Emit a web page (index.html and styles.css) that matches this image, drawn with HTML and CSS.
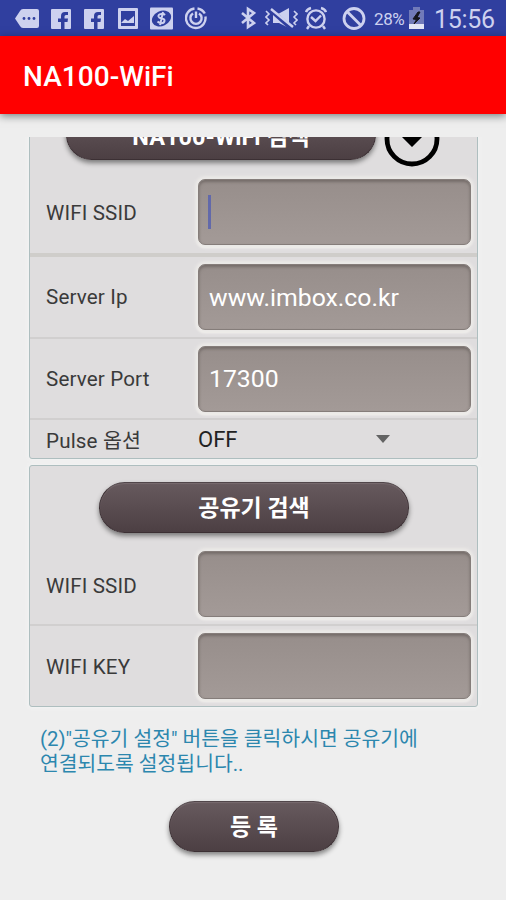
FILE: index.html
```html
<!DOCTYPE html>
<html lang="ko">
<head>
<meta charset="utf-8">
<title>NA100-WiFi</title>
<link rel="stylesheet" href="styles.css">
</head>
<body>
<div class="status">
  <div class="notifications">
    <svg class="icon" width="24" height="24" viewBox="0 0 24 24"><path d="M8 3H22Q24 3 24 5V20Q24 22 22 22H8Q6 22 5 20L0 12.5L5 5Q6 3 8 3Z" fill="#cdd1ef"/><g fill="#303f9f"><circle cx="9" cy="12.5" r="1.4"/><circle cx="14" cy="12.5" r="1.4"/><circle cx="19" cy="12.5" r="1.4"/></g></svg>
    <svg class="icon fb" width="20" height="24" viewBox="0 0 20 24"><rect y="3" width="20" height="20" rx="1" fill="#cdd1ef"/><path d="M10 23V16H7V12.500H10V10Q10 6 14 6H17V9H15Q13.500 9 13.500 10.500V12.500H17L16.500 16H13.500V23Z" fill="#303f9f"/></svg>
    <svg class="icon fb2" width="20" height="24" viewBox="0 0 20 24"><rect y="3" width="20" height="20" rx="1" fill="#cdd1ef"/><path d="M10 23V16H7V12.500H10V10Q10 6 14 6H17V9H15Q13.500 9 13.500 10.500V12.500H17L16.500 16H13.500V23Z" fill="#303f9f"/></svg>
    <svg class="icon photo" width="20" height="24" viewBox="0 0 20 24"><rect y="2" width="20" height="21" rx="1" fill="#cdd1ef"/><path d="M3 5H17V20H3Z" fill="#303f9f"/><path d="M3 17L7 13L10 15L16 10V17Z" fill="#cdd1ef"/></svg>
    <svg class="icon money" width="23" height="24" viewBox="0 0 23 24"><rect y="1.500" width="23" height="22" rx="1" fill="#cdd1ef"/><ellipse cx="11.500" cy="12.500" rx="10" ry="7.500" transform="rotate(-25 11.500 12.500)" fill="#303f9f"/><path d="M15 9Q13.500 7.500 11 8Q8 8.500 8.500 10.500Q9 12 11.500 12.500Q15 13 14.500 15Q14 17.500 11 17.200Q9 17 7.500 15.500M13 6L10 19" fill="none" stroke="#cdd1ef" stroke-width="2"/></svg>
    <svg class="icon power" width="22" height="24" viewBox="0 0 22 24"><g fill="none" stroke="#cdd1ef" stroke-width="2.400"><path d="M9.500 2.500A9.800 9.800 0 1 0 20.400 10.500M12.500 2.500A10 10 0 0 1 19.800 7.500"/><path d="M8 7.500A5.600 5.600 0 1 0 14 7.500"/><path d="M11 5.500V12"/></g></svg>
  </div>
  <div class="system">
    <svg class="icon" width="16" height="24" viewBox="0 0 16 24"><path d="M2 7L14 17L8 21V3L14 7L2 17" fill="none" stroke="#cdd1ef" stroke-width="2.600"/></svg>
    <svg class="icon mute" width="33" height="24" viewBox="0 0 33 24"><path d="M8 7.500H14L24 2V22L14 17H8Z" fill="#cdd1ef"/><path d="M7 5L26 22" stroke="#303f9f" stroke-width="4.500"/><path d="M6 3L28 21" stroke="#cdd1ef" stroke-width="2.400"/><path d="M1 5L4 8L1 11L4 14L1 17L3 19M29 5L32 8L29 11L32 14L29 17L31 19" fill="none" stroke="#cdd1ef" stroke-width="1.600"/></svg>
    <svg class="icon alarm" width="22" height="24" viewBox="0 0 22 24"><g fill="none" stroke="#cdd1ef" stroke-width="2.400"><circle cx="11" cy="13" r="8.600"/><path d="M1 6Q2 3 6 2M21 6Q20 3 16 2M4 20L2 23M18 20L20 23M6 11L10.500 15L16 9.500"/></g></svg>
    <svg class="icon ban" width="24" height="24" viewBox="0 0 24 24"><g fill="none" stroke="#cdd1ef" stroke-width="2.800"><circle cx="12" cy="12.500" r="10"/><path d="M5 5.500L19 19.500"/></g></svg>
    <span class="percent">28%</span>
    <svg class="icon battery" width="15" height="24" viewBox="0 0 15 24"><path d="M4 1H11V4H15V23H0V4H4Z" fill="#717ab9"/><rect y="18" width="15" height="5" fill="#e3e5f5"/><path d="M9 6L4 13L7.500 13.500L5 18L11 12L8 11.500L11 6Z" fill="#15151d" stroke="#15151d"/></svg>
    <span class="clock">15:56</span>
  </div>
</div>
<header class="appbar"><h1>NA100-WiFi</h1></header>
<main class="scroller">
  <section class="panel device">
    <div class="search">
      <button class="pill wide find">NA100-WiFi 검색</button>
      <svg width="56" height="56" viewBox="0 0 56 56"><circle cx="28" cy="28" r="25" fill="none" stroke="#000" stroke-width="4.800"/><path d="M24 14H32V26H38L28 36L18 26H24Z"/></svg>
    </div>
    <div class="row first"><label>WIFI SSID</label><div class="field"><i class="caret"></i></div></div>
    <div class="row"><label>Server Ip</label><div class="field host">www.imbox.co.kr</div></div>
    <div class="row port"><label>Server Port</label><div class="field">17300</div></div>
    <div class="row option"><label>Pulse 옵션</label><div class="select"><span>OFF</span><i class="arrow"></i></div></div>
  </section>
  <section class="panel router">
    <button class="pill wide">공유기 검색</button>
    <div class="row ssid"><label>WIFI SSID</label><div class="field"></div></div>
    <div class="row key"><label>WIFI KEY</label><div class="field"></div></div>
  </section>
  <p class="hint">(2)"공유기 설정" 버튼을 클릭하시면 공유기에<br><span>연결되도록 설정됩니다..</span></p>
  <button class="pill submit">등 록</button>
</main>
</body>
</html>
```
FILE: styles.css
```css
* { box-sizing: border-box; }
body {
  margin: 0;
  width: 506px;
  height: 900px;
  overflow: hidden;
  background: #eee;
  font-family: Roboto, "Noto Sans CJK KR", sans-serif;
  color: #3a3a3a;
}
svg { display: block; flex: none; }
.status {
  height: 36px;
  padding: 0 12px 0 15px;
  background: #303f9f;
  display: flex;
  justify-content: space-between;
}
.notifications, .system { display: flex; align-items: flex-start; padding-top: 6px; }
.fb { margin-left: 12px; }
.fb2 { margin-left: 13px; }
.photo { margin-left: 14px; }
.money { margin-left: 12px; }
.power { margin-left: 12px; }
.mute { margin-left: 9px; }
.alarm { margin-left: 7px; }
.ban { margin-left: 15px; }
.percent { width: 31px; margin-left: 8px; font-size: 17px; line-height: 27px; color: #cdd1ef; white-space: nowrap; letter-spacing: -.4px; }
.battery { margin-left: 4px; }
.clock { width: 60px; margin-left: 10px; font-size: 25px; line-height: 28px; color: #cdd1ef; white-space: nowrap; letter-spacing: -.3px; }
.appbar {
  height: 78px;
  padding-left: 23px;
  background: #f00;
  display: flex;
  align-items: center;
  box-shadow: 0 2px 8px rgba(0, 20, 20, .5);
}
.appbar h1 { margin: 3px 0 0; font-size: 28px; font-weight: 500; color: #fff; line-height: 32px; letter-spacing: .05px; }
.scroller { margin-top: 23px; height: 763px; padding: 0 28px 0 29px; overflow: hidden; display: flex; flex-direction: column; }
.panel { flex: none; background: #dfddde; border: 1px solid #aebebf; border-radius: 3px; box-shadow: 0 0 5px #f6f8f8; }
.device { margin-top: -40px; height: 362px; }
.search { display: flex; padding: 11px 0 0 36px; height: 74px; }
.search svg { margin: 2px 0 0 8px; }
.pill {
  flex: none;
  height: 51px;
  padding: 2px 0 0;
  border: 1px solid #3c3034;
  border-top-color: #51464a;
  border-radius: 26px;
  background: linear-gradient(#675a5e, #4c3f43);
  box-shadow: 0 3px 5px rgba(0, 0, 0, .45), inset 0 1px 1px #786b6f;
  color: #fff;
  font: 700 23px/47px Roboto, "Noto Sans CJK KR", sans-serif;
}
.wide { width: 310px; }
.find { font-size: 23.5px; padding-top: 4px; }
.row { display: flex; align-items: center; padding: 0 6px 0 16px; height: 82px; border-bottom: 2px solid #d1cfcf; font-size: 20.6px; }
.row label { width: 152px; flex: none; white-space: nowrap; letter-spacing: .15px; }
.row.first { height: 85px; padding-bottom: 0; border-bottom: 4px solid #cfcdca; }
.row.first .field { height: 66px; margin-bottom: 1px; }
.row.port { height: 81px; }
.row.option, .row.key { border-bottom: 0; }
.row.option { height: 39px; padding-bottom: 1px; }
.field {
  flex: 1;
  height: 66px;
  padding-left: 10px;
  display: flex;
  align-items: center;
  border: 1px solid #857d7a;
  border-radius: 7px;
  background: linear-gradient(#978e8b, #a39a97);
  box-shadow: 0 0 3px 3px #ebe9e7, 0 2px 2px 1px #f7f6f1, inset 0 2px 3px #746c69;
  color: #fff;
  font-size: 24.8px;
}
.caret { width: 3px; height: 34px; margin-left: -1px; background: #6269aa; }
.select { width: 192px; display: flex; align-items: center; justify-content: space-between; font-size: 22px; color: #222; }
.arrow { border: 7px solid transparent; border-top: 8px solid #636363; border-bottom: 0; margin-top: -1px; }
.router { margin-top: 6px; height: 242px; display: flex; flex-direction: column; }
.router .pill { margin: 16px 0 0 69px; }
.ssid { margin-top: 12px; height: 81px; }
.key { height: 81px; }
.router label { padding-top: 3px; }
.hint { margin: 20px 0 0 11px; font-size: 20.4px; line-height: 25px; color: #2c87ae; white-space: nowrap; }
.submit { width: 170px; margin: 24px 0 0 140px; }
```
